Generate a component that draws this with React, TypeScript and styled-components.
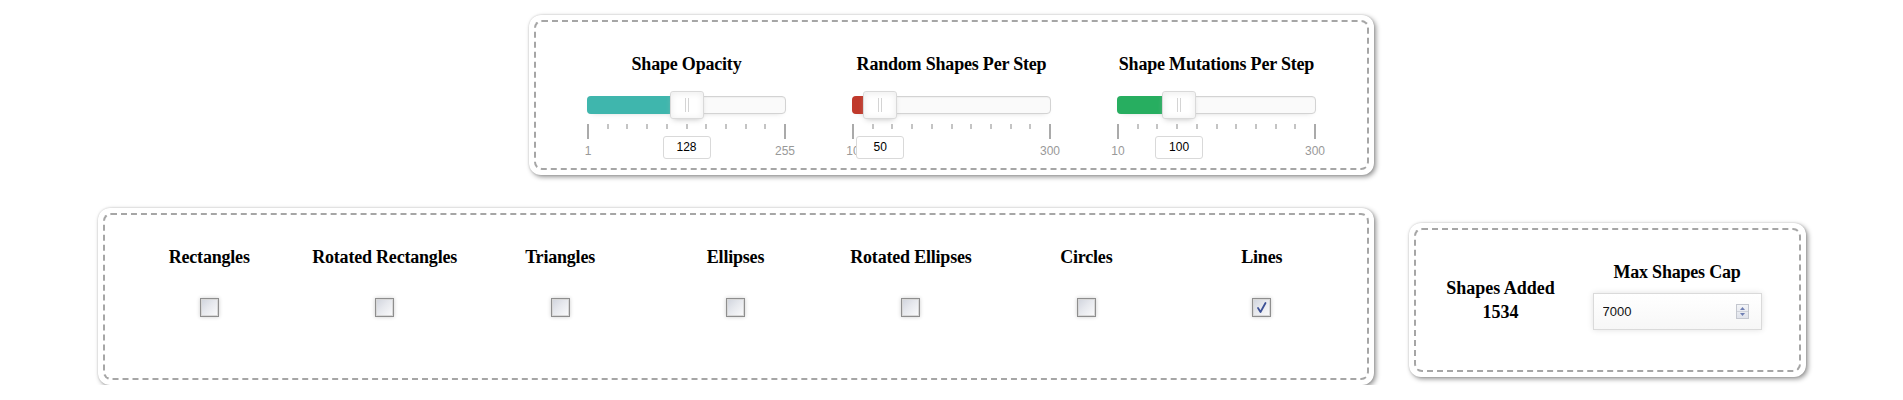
import React from "react";
import styled, { createGlobalStyle } from "styled-components";

const GlobalStyle = createGlobalStyle`
  html, body { margin: 0; padding: 0; background: #ffffff; }
  body { font-family: "Liberation Serif", "Times New Roman", serif; color: #000; }
  * { box-sizing: border-box; }
`;

const Page = styled.div`
  display: flex;
  flex-direction: column;
  align-items: center;
  padding-top: 15px;
`;

const Panel = styled.div<{ $w: number; $h: number; $mt?: number }>`
  width: ${(p) => p.$w}px;
  height: ${(p) => p.$h}px;
  margin-top: ${(p) => p.$mt ?? 0}px;
  flex: none;
  background: #fff;
  border-radius: 12px;
  padding: 5px;
  box-shadow: 2px 2px 5px rgba(0, 0, 0, 0.42), 0 0 2px rgba(0, 0, 0, 0.18);
`;

const Dashed = styled.div`
  height: 100%;
  border: 2px dashed #a6a6a6;
  border-radius: 8px;
`;

const Title = styled.div`
  font-family: "Liberation Serif", "Times New Roman", serif;
  font-weight: bold;
  font-size: 18px;
  line-height: 22px;
  white-space: nowrap;
  text-align: center;
  letter-spacing: -0.2px;
`;

/* ---------- top panel: sliders ---------- */

const SliderRow = styled.div`
  display: flex;
  justify-content: center;
  gap: 65px;
  padding-top: 31px;
`;

const SliderColumn = styled.div`
  width: 200px;
  display: flex;
  flex-direction: column;
  align-items: center;
`;

const Track = styled.div`
  position: relative;
  margin-top: 21px;
  margin-bottom: 54px;
  width: 199px;
  height: 18px;
  background: #fafafa;
  border: 1px solid #d3d3d3;
  border-radius: 4px;
  box-shadow: inset 0 1px 1px #f0f0f0, 0 3px 6px -5px #bbb;
`;

const Connect = styled.div<{ $color: string }>`
  position: absolute;
  left: -1px;
  top: -1px;
  bottom: -1px;
  background: ${(p) => p.$color};
  border-radius: 4px 0 0 4px;
`;

const Handle = styled.div`
  position: absolute;
  top: -6px;
  width: 34px;
  height: 28px;
  transform: translateX(-50%);
  background: #fff;
  border: 1px solid #d9d9d9;
  border-radius: 3px;
  box-shadow: inset 0 0 1px #fff, inset 0 1px 7px #ebebeb, 0 3px 6px -3px #bbb;
  z-index: 2;

  &::before,
  &::after {
    content: "";
    position: absolute;
    top: 6px;
    width: 1px;
    height: 14px;
    background: #d4d4d4;
  }
  &::before { left: 14px; }
  &::after { left: 17px; }
`;

const ValueBox = styled.div`
  position: absolute;
  top: 44px;
  left: 50%;
  transform: translateX(-50%);
  width: 48px;
  height: 23px;
  background: #fff;
  border: 1px solid #d9d9d9;
  border-radius: 3px;
  font-family: "Liberation Sans", Arial, sans-serif;
  font-size: 12px;
  line-height: 21px;
  text-align: center;
  color: #000;
`;

const Marker = styled.div<{ $large: boolean }>`
  position: absolute;
  top: 27px;
  width: 2px;
  margin-left: -1px;
  height: ${(p) => (p.$large ? 15 : 5)}px;
  background: ${(p) => (p.$large ? "#aaa" : "#c4c4c4")};
`;

const PipLabel = styled.div`
  position: absolute;
  top: 47px;
  transform: translateX(-50%);
  font-family: "Liberation Sans", Arial, sans-serif;
  font-size: 12px;
  line-height: 14px;
  color: #999;
  white-space: nowrap;
`;

type SliderProps = { title: string; min: number; max: number; value: number; color: string };

function Slider({ title, min, max, value, color }: SliderProps) {
  const pct = ((value - min) / (max - min)) * 100;
  const ticks = Array.from({ length: 11 }, (_, i) => i * 10);
  return (
    <SliderColumn>
      <Title>{title}</Title>
      <Track>
        <Connect $color={color} style={{ width: `calc(${pct}% + 1px)` }} />
        {ticks.map((t) => (
          <Marker key={t} $large={t === 0 || t === 100} style={{ left: `${t}%` }} />
        ))}
        <PipLabel style={{ left: "0%" }}>{min}</PipLabel>
        <PipLabel style={{ left: "100%" }}>{max}</PipLabel>
        <Handle style={{ left: `${pct}%` }}>
          <ValueBox>{value}</ValueBox>
        </Handle>
      </Track>
    </SliderColumn>
  );
}

/* ---------- bottom row ---------- */

const BottomRow = styled.div`
  display: flex;
  align-items: flex-start;
  gap: 35px;
  margin-top: 33px;
`;

const ShapeGrid = styled.div`
  display: grid;
  grid-template-columns: repeat(7, 1fr);
  padding: 31px 17px 0;
`;

const ShapeCell = styled.label`
  display: flex;
  flex-direction: column;
  align-items: center;
  gap: 30px;
`;

const CheckBox = styled.span<{ $checked: boolean }>`
  display: flex;
  align-items: center;
  justify-content: center;
  width: 19px;
  height: 19px;
  border: 1px solid #8e8e8e;
  background: linear-gradient(135deg, #cfd3dc 0%, #e6e8ed 45%, #fbfbfc 100%);
  box-shadow: inset 0 0 0 1px #d8d8d8, 0 0 4px rgba(0, 0, 0, 0.2);
`;

const shapes = [
  { name: "Rectangles", on: false },
  { name: "Rotated Rectangles", on: false },
  { name: "Triangles", on: false },
  { name: "Ellipses", on: false },
  { name: "Rotated Ellipses", on: false },
  { name: "Circles", on: false },
  { name: "Lines", on: true },
];

const StatsRow = styled.div`
  display: flex;
  align-items: center;
  height: 100%;
`;

const StatCol = styled.div<{ $w: number; $ml?: number; $mb?: number }>`
  width: ${(p) => p.$w}px;
  margin-left: ${(p) => p.$ml ?? 0}px;
  margin-bottom: ${(p) => p.$mb ?? 0}px;
  display: flex;
  flex-direction: column;
  align-items: center;
  gap: 10px;
`;

const StatText = styled.div`
  font-weight: bold;
  font-size: 18px;
  line-height: 24px;
  text-align: center;
`;

const NumberBox = styled.div`
  position: relative;
  width: 169px;
  height: 37px;
  display: flex;
  align-items: center;
  padding: 0 12px 0 9px;
  border: 1px solid #dadada;
  background: linear-gradient(#ffffff, #f7f7f7);
  box-shadow: 0 0 6px rgba(0, 0, 0, 0.12);
`;

const NumberInput = styled.input`
  flex: 1;
  min-width: 0;
  border: none;
  outline: none;
  background: transparent;
  padding: 0;
  font-family: "Liberation Sans", Arial, sans-serif;
  font-size: 13px;
  color: #111;
`;

function Spinner() {
  return (
    <svg width="13" height="15" viewBox="0 0 13 15">
      <defs>
        <linearGradient id="spg" x1="0" y1="0" x2="0" y2="1">
          <stop offset="0" stopColor="#f4f5f8" />
          <stop offset="1" stopColor="#dfe2ea" />
        </linearGradient>
      </defs>
      <rect x="0.5" y="0.5" width="12" height="14" fill="url(#spg)" stroke="#c4c7cf" />
      <line x1="1" y1="7.5" x2="12" y2="7.5" stroke="#cfd2da" />
      <path d="M6.5 3 L9 6 L4 6 Z" fill="#6f7fb3" />
      <path d="M4 9 L9 9 L6.5 12 Z" fill="#6f7fb3" />
    </svg>
  );
}

export default function App() {
  return (
    <>
      <GlobalStyle />
      <Page>
        <Panel $w={845} $h={160}>
          <Dashed>
            <SliderRow>
              <Slider title="Shape Opacity" min={1} max={255} value={128} color="#3fb6ad" />
              <Slider title="Random Shapes Per Step" min={10} max={300} value={50} color="#c0392b" />
              <Slider title="Shape Mutations Per Step" min={10} max={300} value={100} color="#27ae60" />
            </SliderRow>
          </Dashed>
        </Panel>
        <BottomRow>
          <Panel $w={1276} $h={177}>
            <Dashed>
              <ShapeGrid>
                {shapes.map((s) => (
                  <ShapeCell key={s.name}>
                    <Title>{s.name}</Title>
                    <CheckBox $checked={s.on}>
                      {s.on && (
                        <svg width="13" height="13" viewBox="0 0 13 13">
                          <path d="M3 7 L5.5 11 L10.5 2" fill="none" stroke="#3d5196" strokeWidth="1.8" strokeLinecap="round" strokeLinejoin="round" />
                        </svg>
                      )}
                    </CheckBox>
                  </ShapeCell>
                ))}
              </ShapeGrid>
            </Dashed>
          </Panel>
          <Panel $w={397} $h={154} $mt={15}>
            <Dashed>
              <StatsRow>
                <StatCol $w={170}>
                  <StatText>
                    Shapes Added
                    <br />
                    1534
                  </StatText>
                </StatCol>
                <StatCol $w={169} $ml={7} $mb={10}>
                  <Title>Max Shapes Cap</Title>
                  <NumberBox>
                    <NumberInput type="text" defaultValue="7000" />
                    <Spinner />
                  </NumberBox>
                </StatCol>
              </StatsRow>
            </Dashed>
          </Panel>
        </BottomRow>
      </Page>
    </>
  );
}
